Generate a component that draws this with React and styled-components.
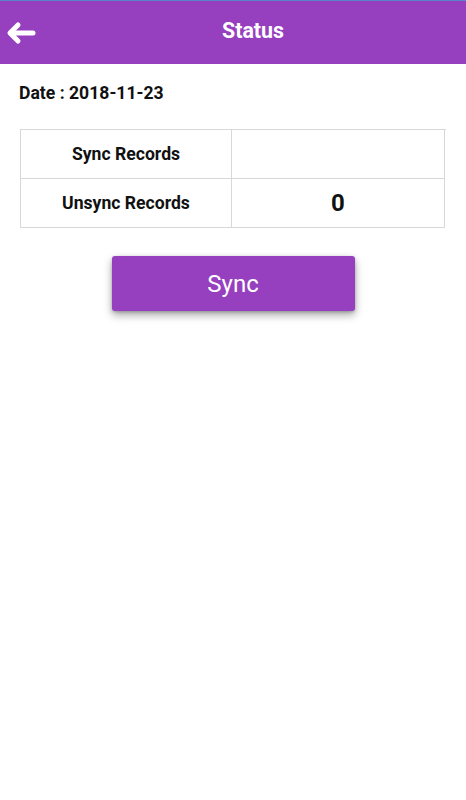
import React from "react";
import styled, { createGlobalStyle } from "styled-components";

const Global = createGlobalStyle`
  html, body { margin: 0; padding: 0; background: #ffffff; }
  body { font-family: Roboto, "Noto Sans", Arial, sans-serif; }
`;

const Page = styled.div`
  width: 466px;
  min-height: 800px;
  background: #fff;
`;

const Header = styled.header`
  height: 63px;
  border-top: 1px solid #5a86c8;
  background: #9640bf;
  display: grid;
  grid-template-columns: 40px 1fr;
  align-items: center;
`;

const BackButton = styled.button`
  border: 0;
  background: transparent;
  padding: 0 0 0 6px;
  height: 100%;
  display: flex;
  align-items: center;
  cursor: pointer;
`;

const Title = styled.h1`
  margin: 0;
  margin-top: -4px;
  text-align: center;
  color: #fff;
  font-size: 21.4px;
  font-weight: 700;
  font-family: Roboto, sans-serif;
`;

const Content = styled.main`
  padding: 19px 20px 0 20px;
  display: flex;
  flex-direction: column;
`;

const DateLine = styled.div`
  font-size: 17.6px;
  line-height: 21px;
  font-weight: 700;
  color: #111;
  margin-left: -1px;
`;

const Table = styled.div`
  margin-top: 25px;
  display: grid;
  grid-template-columns: 211px 213px;
  border-top: 1px solid #d8d8d8;
  border-left: 1px solid #d8d8d8;
`;

const Cell = styled.div`
  height: 48px;
  border-right: 1px solid #d8d8d8;
  border-bottom: 1px solid #d8d8d8;
  display: flex;
  align-items: center;
  justify-content: center;
  color: #111;
  font-weight: 700;
  font-size: ${(p) => (p.$big ? "24px" : "17.6px")};
`;

const SyncButton = styled.button`
  align-self: center;
  margin-top: 28px;
  width: 243px;
  height: 55px;
  border: 0;
  border-radius: 3px;
  background: #9640bf;
  color: #fff;
  font-family: Roboto, sans-serif;
  font-size: 24px;
  font-weight: 400;
  box-shadow: 0 4px 9px rgba(0, 0, 0, 0.35), 0 1px 3px rgba(0, 0, 0, 0.2);
  cursor: pointer;
`;

function BackArrow() {
  return (
    <svg width="32" height="24" viewBox="0 0 32 24">
      <g
        fill="none"
        stroke="#fff"
        strokeWidth="5"
        strokeLinecap="round"
        strokeLinejoin="round"
      >
        <path d="M27 12 H5" />
        <path d="M12 4 L4 12 L12 20" />
      </g>
    </svg>
  );
}

export default function App() {
  return (
    <Page>
      <Global />
      <Header>
        <BackButton aria-label="Back">
          <BackArrow />
        </BackButton>
        <Title>Status</Title>
      </Header>
      <Content>
        <DateLine>Date : 2018-11-23</DateLine>
        <Table>
          <Cell>Sync Records</Cell>
          <Cell></Cell>
          <Cell>Unsync Records</Cell>
          <Cell $big>0</Cell>
        </Table>
        <SyncButton>Sync</SyncButton>
      </Content>
    </Page>
  );
}
